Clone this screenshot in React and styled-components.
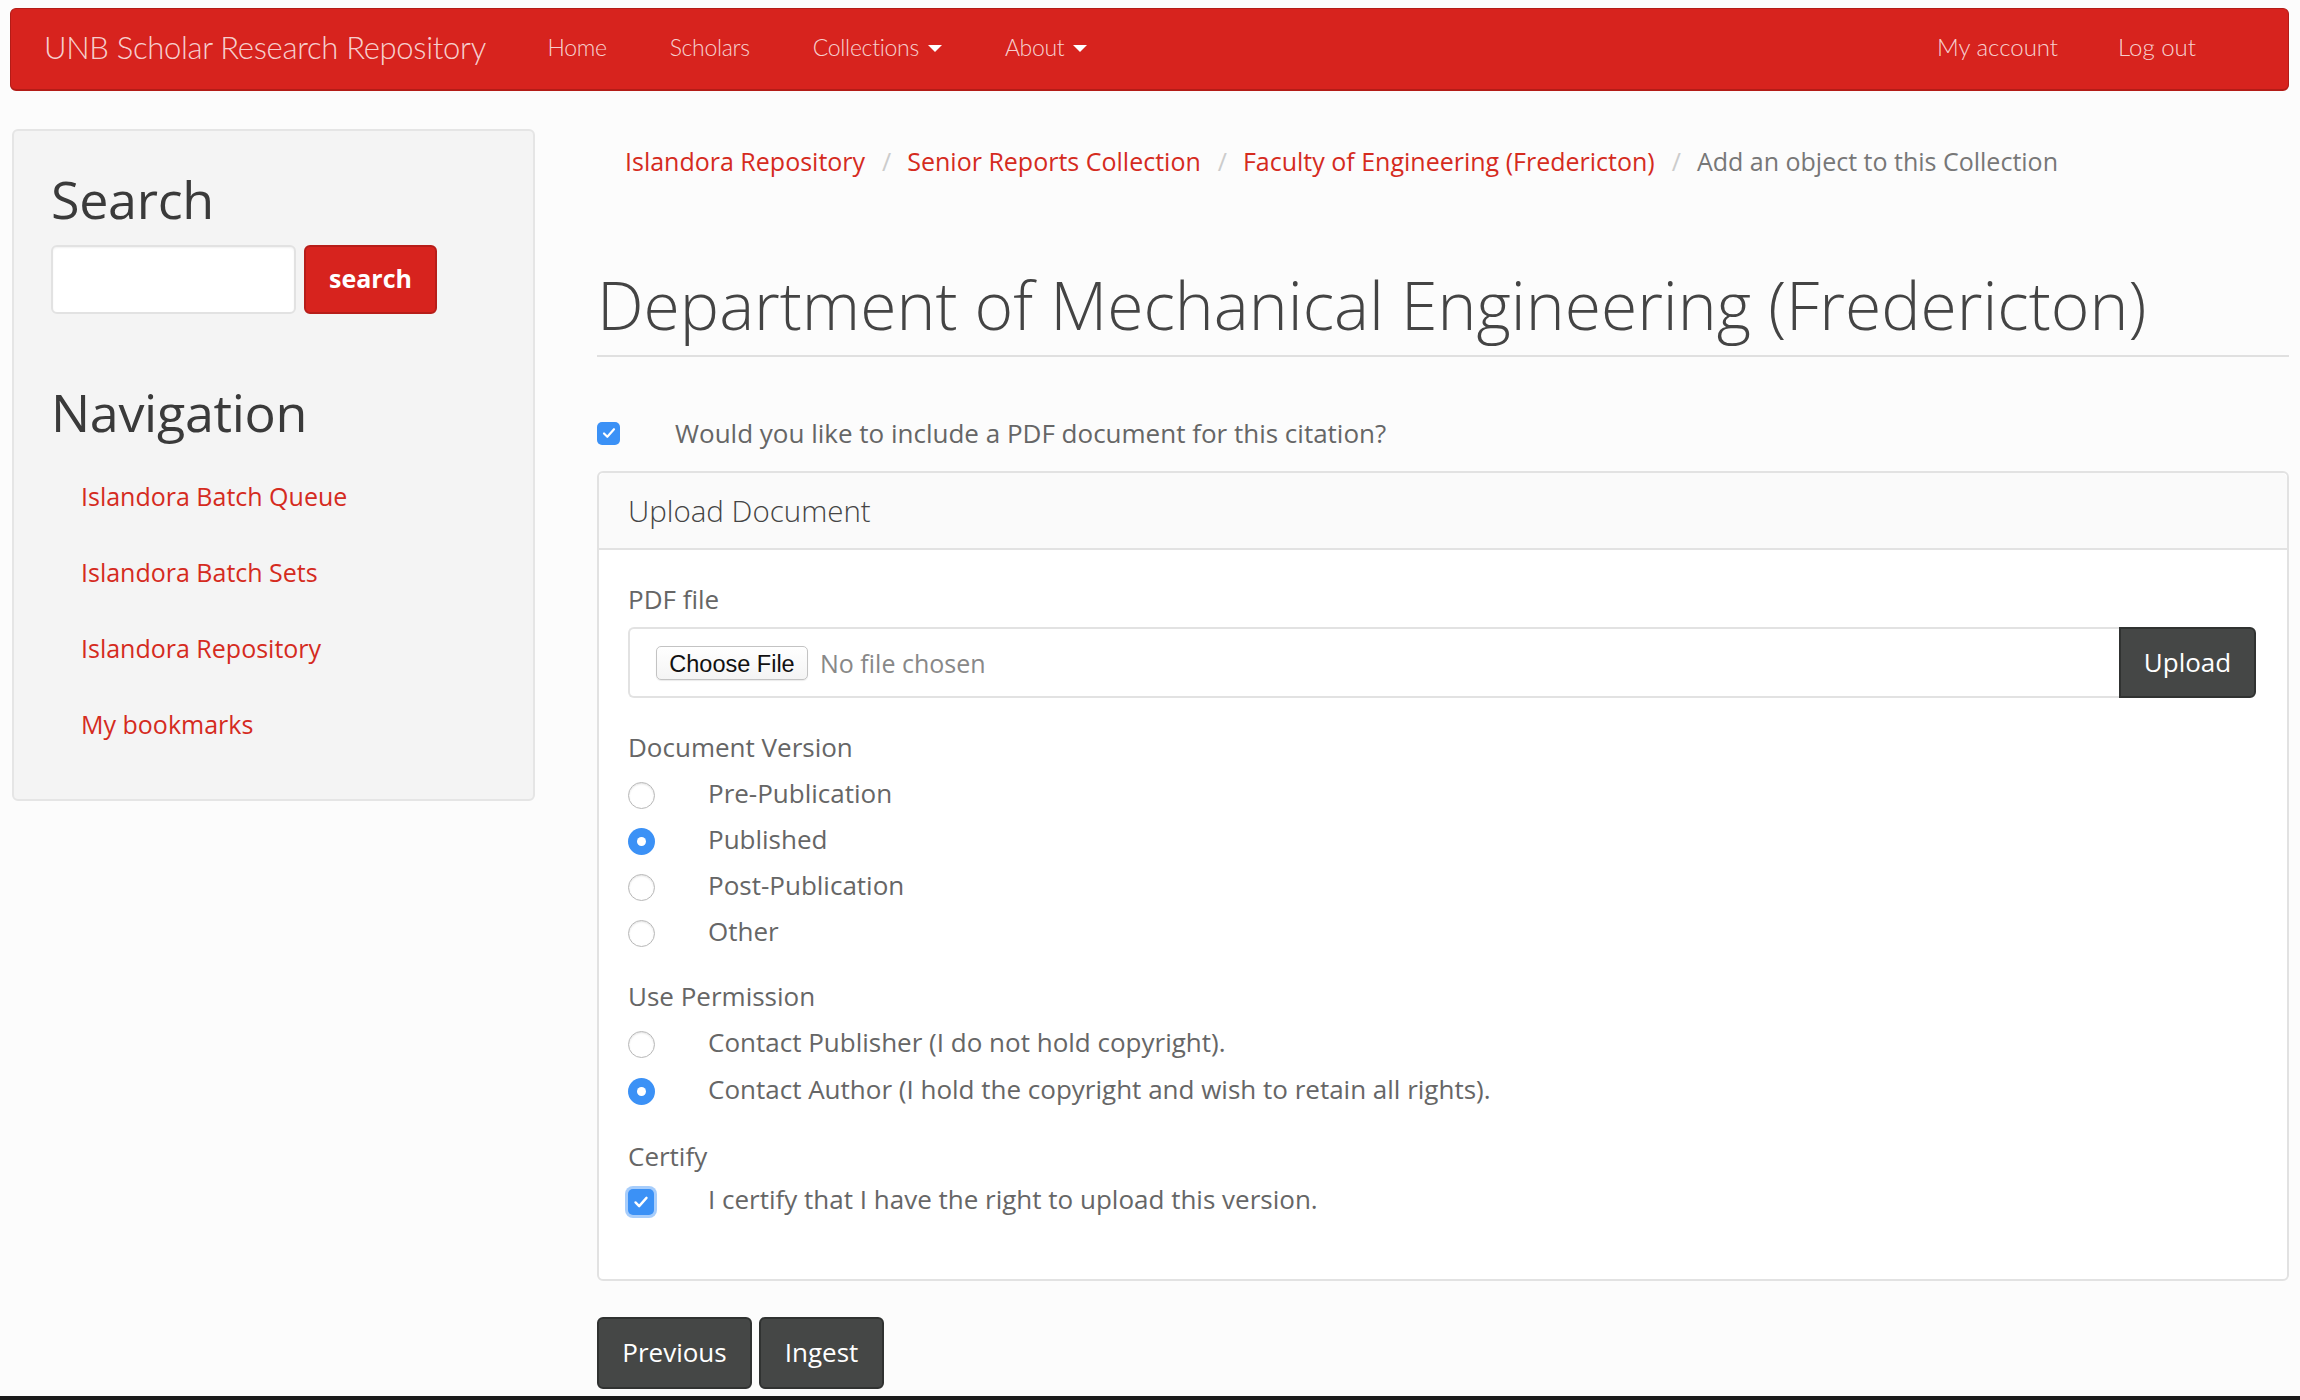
import React from "react";
import styled, { createGlobalStyle } from "styled-components";

const Global = createGlobalStyle`
  html, body { margin: 0; padding: 0; }
  body {
    background: #fcfcfc;
    font-family: "Open Sans", "Noto Sans", sans-serif;
    font-size: 25px;
    line-height: 36px;
    color: #666;
  }
  * { box-sizing: border-box; }
`;

const Navbar = styled.nav`
  margin: 8px 11px 0 10px;
  height: 83px;
  background: #d7231e;
  border: 1px solid #b31c17;
  border-bottom-width: 2px;
  border-radius: 6px;
  display: flex;
  align-items: center;
  padding-bottom: 5px;
  font-family: "Lato", sans-serif;
  font-weight: 300;
  color: rgba(255, 255, 255, 0.8);
`;

const Brand = styled.a`
  font-size: 31px;
  padding-left: 33px;
  letter-spacing: -0.3px;
`;

const NavList = styled.div`
  display: flex;
  align-items: center;
  margin-left: 30px;
  flex: 1;
`;

const NavRight = styled.div`
  display: flex;
  align-items: center;
  padding-right: 62px;
`;

const NavItem = styled.a`
  font-size: ${(p) => (p.$right ? 24 : 23)}px;
  letter-spacing: ${(p) => (p.$right ? 0 : -0.3)}px;
  padding: 0 ${(p) => (p.$right ? 30 : 31.5)}px;
  display: flex;
  align-items: center;
`;

const Caret = styled.span`
  display: inline-block;
  margin-left: 9px;
  margin-top: 3px;
  width: 0;
  height: 0;
  border-left: 7px solid transparent;
  border-right: 7px solid transparent;
  border-top: 7px solid #fff;
`;

const Container = styled.div`
  display: flex;
  align-items: flex-start;
  padding: 0 11px 0 12px;
`;

const Sidebar = styled.aside`
  width: 523px;
  flex: none;
  margin-top: 38px;
  background: #f4f4f4;
  border: 2px solid #e5e5e5;
  border-radius: 6px;
  padding: 39px 37px 37px;
`;

const SideHeading = styled.h2`
  margin: ${(p) => p.$top || 0}px 0 0;
  font-size: 52px;
  line-height: 58px;
  font-weight: 400;
  color: #3a3a3a;
  letter-spacing: -0.3px;
`;

const SearchRow = styled.div`
  display: flex;
  gap: 8px;
  margin-top: 17px;
`;

const SearchInput = styled.input`
  width: 245px;
  height: 69px;
  border: 2px solid #e2e2e2;
  border-radius: 6px;
  background: #fff;
  box-shadow: inset 0 1px 2px rgba(0, 0, 0, 0.06);
`;

const SearchButton = styled.button`
  width: 133px;
  height: 69px;
  background: #d7231e;
  border: 2px solid #b71d19;
  border-radius: 6px;
  color: #fff;
  font-family: "Open Sans", sans-serif;
  font-weight: 700;
  font-size: 25px;
  padding: 0 0 4px;
`;

const SideLinks = styled.ul`
  list-style: none;
  margin: 17px 0 0;
  padding: 0 0 0 30px;
`;

const SideLink = styled.li`
  height: 76px;
  display: flex;
  align-items: center;
  color: #d52b1e;
  font-size: 25px;
`;

const Main = styled.main`
  margin-left: 62px;
  flex: 1;
  padding-top: 52px;
`;

const Breadcrumb = styled.ol`
  list-style: none;
  margin: 0;
  padding: 0 0 0 28px;
  display: flex;
  font-size: 25px;
  line-height: 36px;
  & > li + li::before {
    content: "/";
    color: #ccc;
    padding: 0 16px 0 17px;
  }
`;

const Crumb = styled.li`
  color: ${(p) => (p.$active ? "#777" : "#d52b1e")};
`;

const PageTitle = styled.h1`
  margin: 82px 0 0;
  font-size: 66px;
  line-height: 86px;
  font-weight: 300;
  color: #444;
  padding-bottom: 8px;
  border-bottom: 2px solid #e0e0e0;
`;

const CheckRow = styled.label`
  display: flex;
  align-items: center;
  margin-top: 58px;
  color: #666;
  font-size: 26px;
`;

const Box = styled.span`
  flex: none;
  width: ${(p) => p.$size}px;
  height: ${(p) => p.$size}px;
  border-radius: 5px;
  background: #3b91f6;
  display: inline-flex;
  align-items: center;
  justify-content: center;
  margin-right: ${(p) => p.$gap}px;
  margin-top: ${(p) => p.$shift || 0}px;
  box-shadow: ${(p) => (p.$focus ? "0 0 0 3px rgba(59,145,246,0.45)" : "none")};
`;

const Panel = styled.section`
  margin-top: 20px;
  border: 2px solid #e2e2e2;
  border-radius: 6px;
  background: #fff;
`;

const PanelHeading = styled.div`
  height: 77px;
  background: #fafafa;
  border-bottom: 2px solid #e2e2e2;
  border-radius: 6px 6px 0 0;
  display: flex;
  align-items: center;
  padding: 0 29px;
`;

const PanelTitle = styled.h3`
  margin: 0;
  font-size: 29.5px;
  font-weight: 300;
  color: #444;
`;

const PanelBody = styled.div`
  padding: 31px 31px 53px 29px;
`;

const FieldLabel = styled.div`
  margin-top: ${(p) => p.$top || 0}px;
  color: #666;
  font-size: 26px;
  line-height: 36px;
`;

const FileGroup = styled.div`
  margin-top: 10px;
  display: flex;
  height: 71px;
`;

const FileField = styled.div`
  flex: 1;
  border: 2px solid #e2e2e2;
  border-right: none;
  border-radius: 6px 0 0 6px;
  display: flex;
  align-items: center;
  padding-left: 26px;
`;

const ChooseButton = styled.span`
  display: inline-flex;
  align-items: center;
  justify-content: center;
  width: 152px;
  height: 34px;
  border: 1px solid #c3c3c3;
  border-radius: 5px;
  background: linear-gradient(#fff, #f4f4f4);
  font-family: "Liberation Sans", Arial, sans-serif;
  font-size: 23.5px;
  color: #111;
  padding-top: 2px;
  box-shadow: 0 1px 1px rgba(0, 0, 0, 0.08);
`;

const NoFile = styled.span`
  margin-left: 12px;
  color: #888;
  font-size: 25px;
`;

const DarkButton = styled.button`
  height: ${(p) => p.$h || 71}px;
  width: ${(p) => p.$w}px;
  background: #454746;
  border: 2px solid #303231;
  border-radius: ${(p) => p.$radius || "6px"};
  color: #fff;
  font-family: "Open Sans", sans-serif;
  font-size: 26px;
  font-weight: 500;
  padding: 0 0 2px;
`;

const Options = styled.div`
  margin-top: ${(p) => p.$top}px;
  display: flex;
  flex-direction: column;
`;

const Option = styled.label`
  display: flex;
  align-items: center;
  height: ${(p) => p.$h || 46}px;
  padding-bottom: 8px;
  color: #666;
  font-size: 26px;
`;

const Radio = styled.span`
  flex: none;
  width: 27px;
  height: 27px;
  margin-top: 5px;
  border-radius: 50%;
  margin-right: 53px;
  background: ${(p) => (p.$checked ? "#3b91f6" : "#fff")};
  border: ${(p) => (p.$checked ? "none" : "1.5px solid #b8b8b8")};
  box-shadow: ${(p) => (p.$checked ? "none" : "inset 0 1px 2px rgba(0,0,0,0.12)")};
  display: inline-flex;
  align-items: center;
  justify-content: center;
  &::after {
    content: "";
    display: ${(p) => (p.$checked ? "block" : "none")};
    width: 9px;
    height: 9px;
    border-radius: 50%;
    background: #fff;
  }
`;

const ButtonRow = styled.div`
  display: flex;
  gap: 7px;
  margin-top: 36px;
`;

const Footer = styled.footer`
  margin-top: 7px;
  height: 10px;
  background: #1a1a1a;
`;

const Check = ({ size }) => (
  <svg width={size} height={size} viewBox="0 0 24 24" fill="none">
    <path d="M6 12.5l4 4 8-9" stroke="#fff" strokeWidth="2.6" strokeLinecap="round" strokeLinejoin="round" />
  </svg>
);

export default function App() {
  return (
    <>
      <Global />
      <Navbar>
        <Brand>UNB Scholar Research Repository</Brand>
        <NavList>
          <NavItem>Home</NavItem>
          <NavItem>Scholars</NavItem>
          <NavItem>
            Collections
            <Caret />
          </NavItem>
          <NavItem>
            About
            <Caret />
          </NavItem>
        </NavList>
        <NavRight>
          <NavItem $right>My account</NavItem>
          <NavItem $right>Log out</NavItem>
        </NavRight>
      </Navbar>
      <Container>
        <Sidebar>
          <SideHeading>Search</SideHeading>
          <SearchRow>
            <SearchInput type="text" aria-label="Search" />
            <SearchButton>search</SearchButton>
          </SearchRow>
          <SideHeading $top={69}>Navigation</SideHeading>
          <SideLinks>
            <SideLink>Islandora Batch Queue</SideLink>
            <SideLink>Islandora Batch Sets</SideLink>
            <SideLink>Islandora Repository</SideLink>
            <SideLink>My bookmarks</SideLink>
          </SideLinks>
        </Sidebar>
        <Main>
          <Breadcrumb>
            <Crumb>Islandora Repository</Crumb>
            <Crumb>Senior Reports Collection</Crumb>
            <Crumb>Faculty of Engineering (Fredericton)</Crumb>
            <Crumb $active>Add an object to this Collection</Crumb>
          </Breadcrumb>
          <PageTitle>Department of Mechanical Engineering (Fredericton)</PageTitle>
          <CheckRow>
            <Box $size={23} $gap={55}>
              <Check size={20} />
            </Box>
            Would you like to include a PDF document for this citation?
          </CheckRow>
          <Panel>
            <PanelHeading>
              <PanelTitle>Upload Document</PanelTitle>
            </PanelHeading>
            <PanelBody>
              <FieldLabel>PDF file</FieldLabel>
              <FileGroup>
                <FileField>
                  <ChooseButton>Choose File</ChooseButton>
                  <NoFile>No file chosen</NoFile>
                </FileField>
                <DarkButton $w={137} $radius="0 6px 6px 0">Upload</DarkButton>
              </FileGroup>
              <FieldLabel $top={31}>Document Version</FieldLabel>
              <Options $top={9}>
                <Option><Radio />Pre-Publication</Option>
                <Option><Radio $checked />Published</Option>
                <Option><Radio />Post-Publication</Option>
                <Option><Radio />Other</Option>
              </Options>
              <FieldLabel $top={20}>Use Permission</FieldLabel>
              <Options $top={8}>
                <Option $h={47}><Radio />Contact Publisher (I do not hold copyright).</Option>
                <Option $h={47}><Radio $checked />Contact Author (I hold the copyright and wish to retain all rights).</Option>
              </Options>
              <FieldLabel $top={22}>Certify</FieldLabel>
              <Options $top={6}>
                <Option>
                  <Box $size={26} $gap={54} $focus $shift={5}>
                    <Check size={22} />
                  </Box>
                  I certify that I have the right to upload this version.
                </Option>
              </Options>
            </PanelBody>
          </Panel>
          <ButtonRow>
            <DarkButton $w={155} $h={72}>Previous</DarkButton>
            <DarkButton $w={125} $h={72}>Ingest</DarkButton>
          </ButtonRow>
        </Main>
      </Container>
      <Footer />
    </>
  );
}
